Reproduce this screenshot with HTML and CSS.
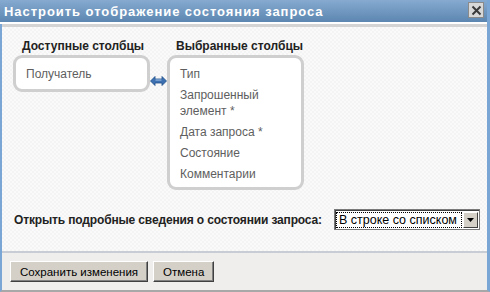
FILE: index.html
```html
<!DOCTYPE html>
<html lang="ru">
  <head>
    <meta charset="UTF-8" />
    <title>Настроить отображение состояния запроса</title>
    <link rel="stylesheet" href="styles.css">
  </head>
  <body>
    <div class="dialog">
      <div class="titlebar">
        <span class="title">Настроить отображение состояния запроса</span>
        <button class="close" title="Закрыть">
          <svg width="11" height="11" viewBox="0 0 11 11">
            <path d="M1.5 1.5 L9.5 9.5 M9.5 1.5 L1.5 9.5" stroke="#3a3a3a" stroke-width="2" />
          </svg>
        </button>
      </div>
      <div class="content">
        <div class="columns">
          <div class="col">
            <div class="col-head">Доступные столбцы</div>
            <ul class="list list-short">
              <li>Получатель</li>
            </ul>
          </div>
          <div class="swap">
            <svg width="17" height="10" viewBox="0 0 17 10">
              <path d="M0.5 5 L5 0.5 L5 3 L12 3 L12 0.5 L16.5 5 L12 9.5 L12 7 L5 7 L5 9.5 Z" fill="#3d70b0" stroke="#1f4f8c" stroke-width="0.8" />
              <path d="M5.5 4 L11.5 4" stroke="#a9c6ea" stroke-width="1" />
            </svg>
          </div>
          <div class="col">
            <div class="col-head">Выбранные столбцы</div>
            <ul class="list">
              <li>Тип</li>
              <li>Запрошенный элемент *</li>
              <li>Дата запроса *</li>
              <li>Состояние</li>
              <li>Комментарии</li>
            </ul>
          </div>
        </div>
        <div class="option">
          <label for="detailMode">Открыть подробные сведения о состоянии запроса:</label>
          <div class="select" id="detailMode">
            <span class="select-value">В строке со списком</span>
            <span class="select-btn">
              <svg width="7" height="4" viewBox="0 0 7 4"><path d="M0 0 L7 0 L3.5 4 Z" fill="#000" /></svg>
            </span>
          </div>
        </div>
      </div>
      <div class="footer">
        <button class="btn">Сохранить изменения</button>
        <button class="btn">Отмена</button>
      </div>
    </div>
  </body>
</html>
```

FILE: styles.css
```css
body {
  margin: 0;
  padding: 0;
  font-family: "Liberation Sans", Arial, sans-serif;
  background-color: #fff;
}
.dialog {
  width: 485px;
  height: 290px;
  border-left: 2px solid #7aa6d6;
  border-right: 3px solid #7aa6d6;
  border-bottom: 2px solid #a8a8a8;
  display: flex;
  flex-direction: column;
  background-color: #efeeec;
}
.titlebar {
  height: 22px;
  background: linear-gradient(#86aad0, #5c86b0);
  display: flex;
  align-items: center;
  justify-content: space-between;
  padding: 0 3px 0 4px;
  margin-left: -2px;
  border-bottom: 2px solid #fff;
}
.title {
  color: #fff;
  font-weight: bold;
  font-size: 13px;
  letter-spacing: 0.95px;
}
.close {
  width: 16px;
  height: 16px;
  padding: 0;
  margin-top: -2px;
  border: 1px solid #8a8a8a;
  background-color: #d8d8d8;
  display: flex;
  align-items: center;
  justify-content: center;
}
.content {
  height: 229px;
  flex-shrink: 0;
  box-sizing: border-box;
  border-top: 3px solid #d4d4d4;
  border-bottom: 2px solid #c8ccd4;
  background-color: #f8f8f8;
  background-image: repeating-conic-gradient(#f4f4f4 0 25%, #fafafa 0 50%);
  background-size: 4px 4px;
  padding: 12px 0 0 11px;
}
.columns {
  display: flex;
  align-items: flex-start;
}
.col {
  width: 137px;
}
.col-head {
  font-size: 12px;
  font-weight: bold;
  color: #222;
  padding-left: 9px;
  height: 16px;
  line-height: 15px;
}
.list {
  list-style: none;
  margin: 0;
  padding: 8px 20px 5px 10px;
  background-color: #fff;
  border: 3px solid #cfcfcf;
  border-radius: 9px;
  font-size: 12px;
  color: #5e5e5e;
  line-height: 16px;
}
.list li {
  margin-bottom: 5px;
}
.list li:last-child {
  margin-bottom: 0;
}
.list-short {
  padding-bottom: 7px;
}
.swap {
  width: 17px;
  margin-top: 33px;
}
.option {
  display: flex;
  align-items: center;
  margin-top: 19px;
  margin-left: 1px;
}
.option label {
  font-size: 12px;
  font-weight: bold;
  color: #222;
  letter-spacing: -0.15px;
  width: 320px;
}
.select {
  width: 142px;
  height: 17px;
  border: 1px solid #7a7a7a;
  box-shadow: inset 1px 1px 0 #404040;
  background-color: #fff;
  display: flex;
  align-items: center;
  padding: 1px;
}
.select-value {
  flex: 1;
  font-size: 12.5px;
  white-space: nowrap;
  overflow: hidden;
  color: #000;
  border: 1px dotted #000;
  padding: 0 2px;
  line-height: 14px;
  margin-right: 1px;
}
.select-btn {
  width: 15px;
  height: 16px;
  background-color: #d4d0c8;
  border: 1px solid;
  border-color: #fff #404040 #404040 #fff;
  box-sizing: border-box;
  display: flex;
  align-items: center;
  justify-content: center;
}
.footer {
  flex: 1;
  display: flex;
  align-items: center;
  gap: 5px;
  padding: 0 8px;
}
.btn {
  font-family: "Liberation Sans", Arial, sans-serif;
  font-size: 11.5px;
  height: 21px;
  padding: 0 9px;
  background-color: #d4d0c8;
  color: #000;
  border: 1px solid;
  border-color: #fff #404040 #404040 #fff;
  box-shadow: inset -1px -1px 0 #808080;
}
```
